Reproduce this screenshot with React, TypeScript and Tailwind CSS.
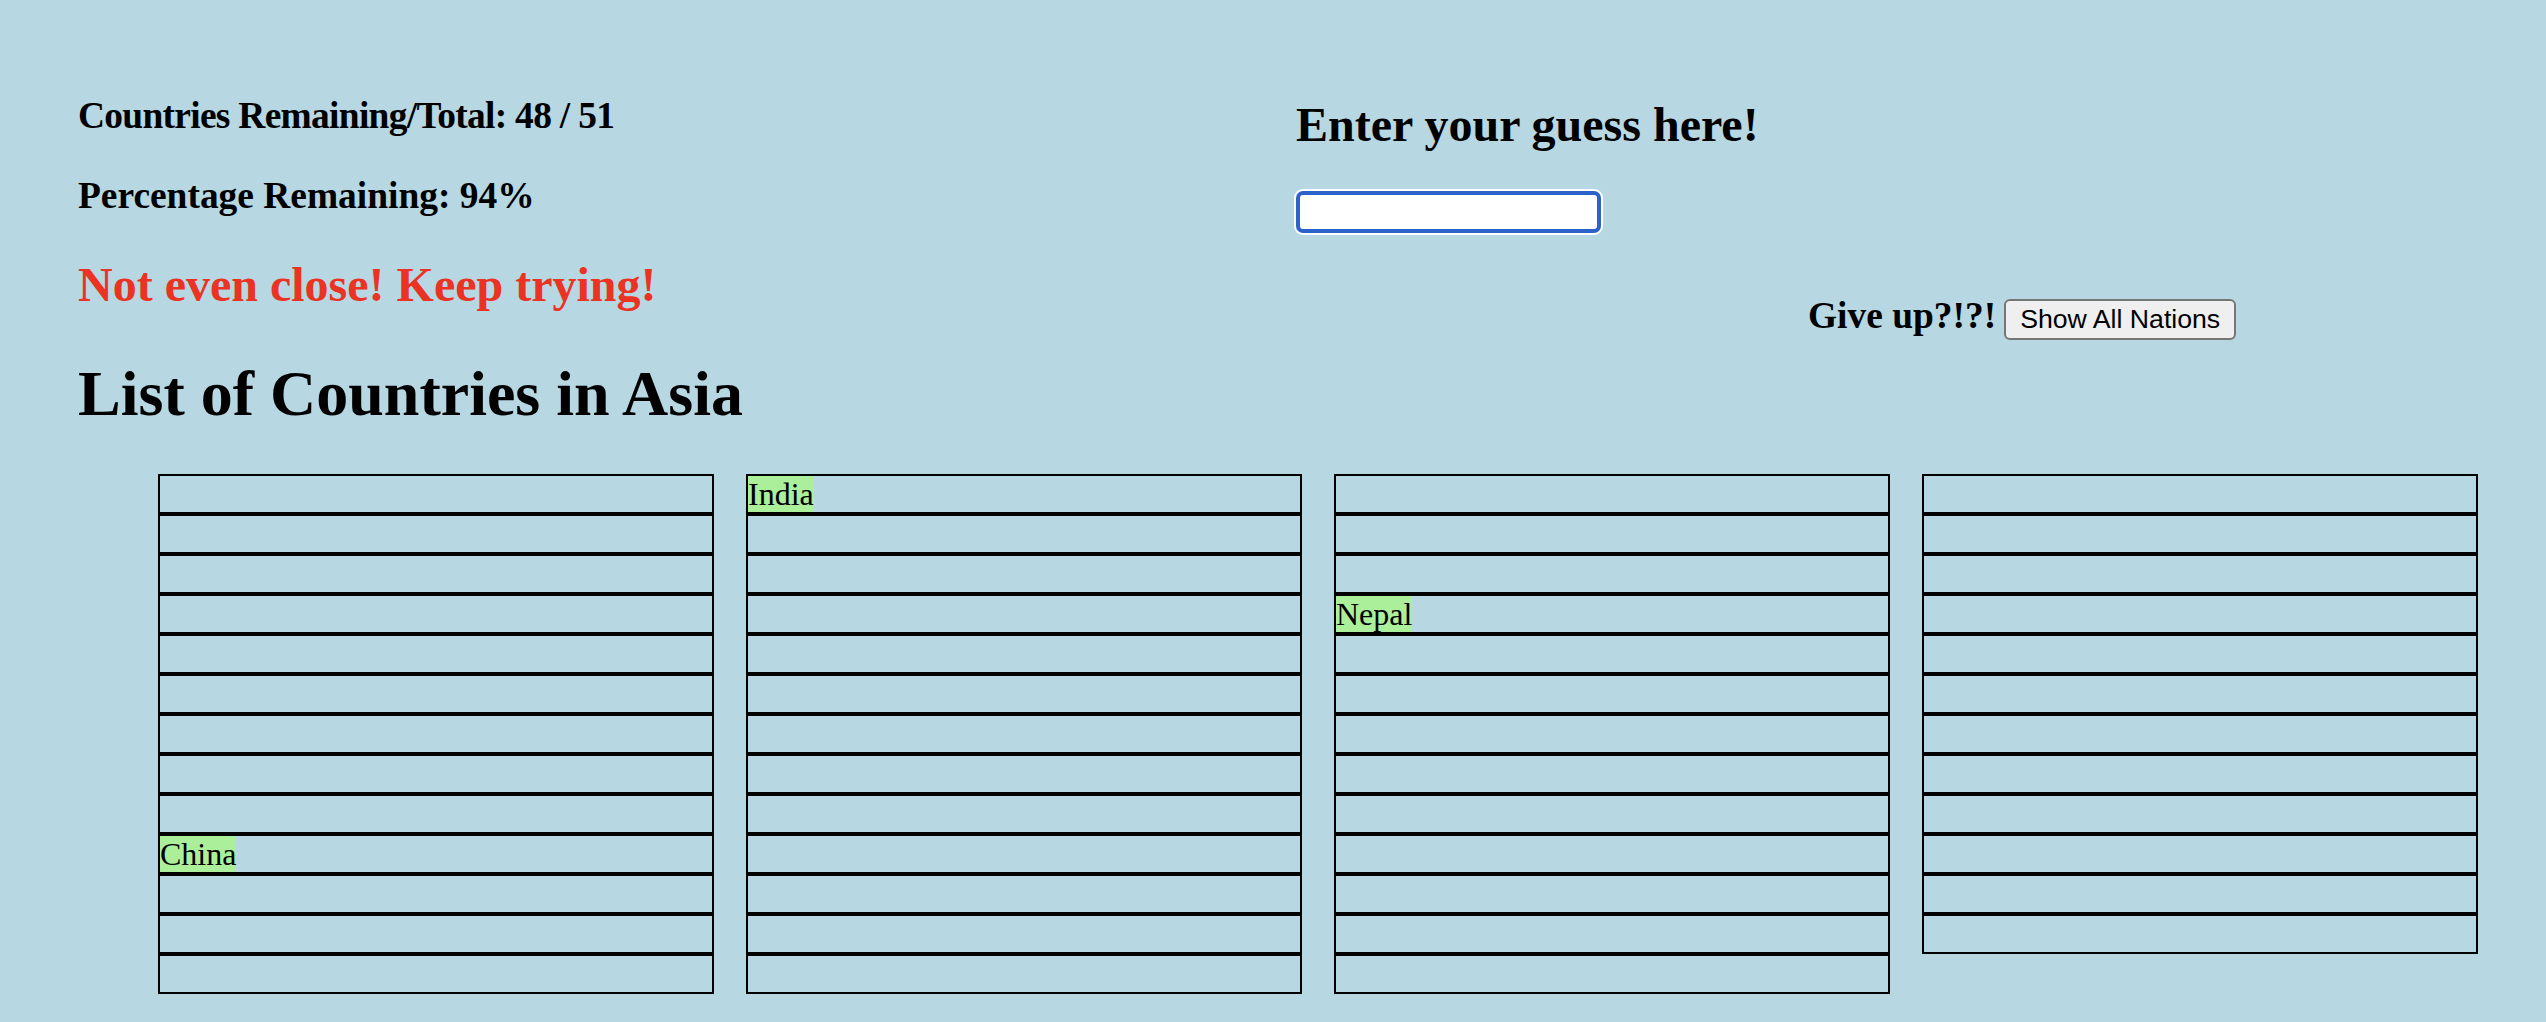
import React from "react";

interface Column {
  key: string;
  rows: number;
  found: Record<number, string>;
}

// four columns of blank answer slots, 51 in all
const columns: Column[] = [
  { key: "c1", rows: 13, found: { 9: "China" } },
  { key: "c2", rows: 13, found: { 0: "India" } },
  { key: "c3", rows: 13, found: { 3: "Nepal" } },
  { key: "c4", rows: 12, found: {} },
];

const serif = "font-['Liberation_Serif','Times_New_Roman',serif]";

function CountryColumn({ col }: { col: Column }) {
  return (
    <div className="flex w-[556px] flex-col">
      {Array.from({ length: col.rows }).map((_, i) => {
        const name = col.found[i];
        return (
          <div
            key={i}
            className="h-[40px] border-2 border-black text-[32px] leading-[36px] text-black"
          >
            {name && (
              <span className="inline-block h-[36px] bg-[#acef9b]">{name}</span>
            )}
          </div>
        );
      })}
    </div>
  );
}

export default function App() {
  return (
    <div className={`min-h-screen w-full bg-[#b7d7e3] text-black ${serif}`}>
      <div className="flex items-start">
        {/* Score column */}
        <div className="w-[1296px] shrink-0 pl-[78px] pt-[94px]">
          <h3 className="text-[37.44px] font-bold leading-[43px] tracking-[-0.7px]">
            Countries Remaining/Total: 48 / 51
          </h3>
          <h3 className="mt-[37px] text-[37.44px] font-bold leading-[43px]">
            Percentage Remaining: 94%
          </h3>
          <h2 className="mt-[40px] text-[48px] font-bold leading-[55px] text-[#ea3323]">
            Not even close! Keep trying!
          </h2>
        </div>

        {/* Guess column */}
        <div className="pt-[97px]">
          <h2 className="text-[48px] font-bold leading-[55px]">
            Enter your guess here!
          </h2>
          <input
            type="text"
            className="mt-[39px] block h-[42px] w-[305px] rounded-[7px] border-4 border-[#2c62c9] bg-white shadow-[0_0_0_2px_#ffffff] outline-none"
          />
          <div className="ml-[512px] mt-[61px] flex items-baseline gap-[8px]">
            <h3 className="text-[37.44px] font-bold leading-[43px]">
              Give up?!?!
            </h3>
            <button className="h-[41px] rounded-[6px] border-2 border-[#767676] bg-[#efefef] px-[14px] font-['Liberation_Sans',Arial,sans-serif] text-[26.67px] leading-[33px] text-black">
              Show All Nations
            </button>
          </div>
        </div>
      </div>

      <h1 className="ml-[78px] mt-[17px] text-[64px] font-bold leading-[74px]">
        List of Countries in Asia
      </h1>

      <div className="mt-[43px] flex items-start gap-[32px] pb-[30px] pl-[158px]">
        {columns.map((c) => (
          <CountryColumn key={c.key} col={c} />
        ))}
      </div>
    </div>
  );
}
